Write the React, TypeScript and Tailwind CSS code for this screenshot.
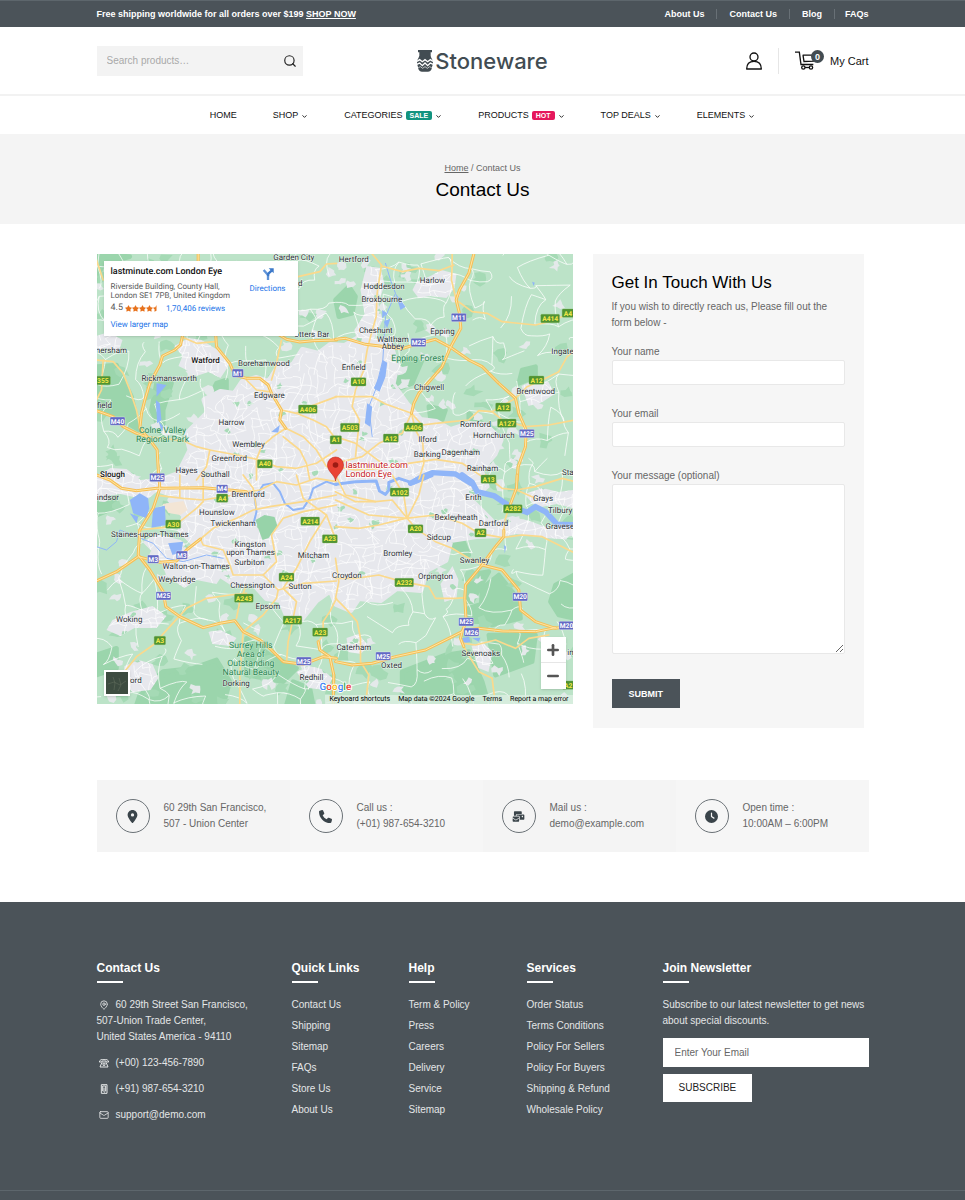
import { useState } from 'react';
import { FaLocationDot, FaPhone, FaClock, FaEnvelopesBulk, FaStar, FaStarHalf } from 'react-icons/fa6';
import { ChevronDown, Mail, MapPin, Minus, Plus, Search } from 'lucide-react';

interface MapTile {
  transform: string;
  water?: string[];
  river?: { d: string; width: number }[];
  forest?: string[];
  motorways: string[];
  roads: string[];
  towns: [string, number, number][];
  parks?: [string, number, number][];
  shields: [string, number, number][];
}

const CITY =
  'M104 166L112 158 108 146 124 138 138 140 146 128 160 124 172 128 184 110 196 112 206 96 222 100 234 91 248 92 262 84 294 91 300 112 296 130 310 150 324 166 340 168 354 176 372 170 389 171 404 186 398 200 384 216 390 232 374 246 394 266 404 281 380 282 354 286 349 306 330 316 324 336 300 334 284 346 262 344 254 356 240 350 234 336 220 346 204 366 190 360 184 346 170 344 154 326 138 330 124 321 112 322 94 306 98 290 84 276 88 262 74 246 90 234 84 216 94 196 90 180Z';

// Every tile is drawn at three units to the pixel
const tiles: MapTile[] = [
  {
    transform: 'translate(0 -4) scale(0.3333)',
    forest: ['M0 350L60 345 105 440 128 540 60 500 0 470Z', 'M100 20L20 40 0 90 0 12Z', 'M200 480L225 400 180 400 165 480 200 560Z', 'M390 390L360 400 350 420 390 440Z', 'M640 350L600 370 590 400 660 410Z'],
    water: ['M180 400L210 405 180 440Z', 'M178 450L190 460 195 510 182 520Z', 'M185 510L200 530 196 545Z', 'M525 545L550 525 545 548Z'],
    motorways: [
      'M305 12L305 60 330 180 358 258 360 290 400 340 415 375 450 385 490 385 515 405 525 430 555 480 550 510 568 535',
      'M258 258L252 285 235 300 198 318 190 345 160 400 145 450 135 490 130 535 160 570 182 600 187 690',
      'M540 250L570 268 610 276 650 272 720 270',
      'M0 482L50 500 80 530 120 550 150 560',
    ],
    roads: [
      'M150 560L260 572 300 590 340 600 420 615 480 628',
      'M0 330L50 335 80 370 100 420 120 480 130 530',
      'M20 330L15 420 0 450',
      'M720 40L690 42 670 65 605 80',
      'M555 270L540 340 525 390',
      'M568 535L620 560 660 600 690 650 720 650',
      'M555 480L600 490 650 510 690 530 720 570',
      'M600 490L640 470 680 455 720 440',
      'M480 628L480 690M340 600L330 650 300 690',
      'M258 262L300 280 355 275',
      'M450 390L480 420 515 425M480 628L495 590 530 560 568 535',
      'M0 30L20 90',
      'M480 628L540 650 600 655 660 640 720 600M560 560L610 600 630 640 640 690',
    ],
    towns: [
      ['Garden City', 592, 29], ['nersham', 45, 309], ['Rickmansworth', 218, 392], ['Borehamwood', 502, 348], ['Edgware', 519, 444],
      ['Harrow', 405, 524], ['Wembley', 456, 591], ['Greenford', 398, 634], ['Hayes', 270, 669], ['Southall', 356, 680],
      ['otters Bar', 646, 261], ['field', 24, 474], ['d', 611, 108],
    ],
    parks: [['Colne Valley', 198, 548], ['Regional Park', 198, 575]],
    shields: [['M1', 424, 369], ['M40', 63, 513], ['M25', 182, 682], ['355', 19, 391], ['A406', 634, 477], ['A40', 505, 641], ['A1', 718, 569]],
  },
  {
    transform: 'translate(239 -4) scale(0.3333)',
    forest: ['M150 350L200 330 260 330 230 400 180 420 165 390Z', 'M40 110L60 140 50 190 10 200 0 150Z', 'M280 470L330 480 320 510 285 505Z', 'M400 490L440 520 430 540 400 520Z', 'M560 360L600 350 600 380 550 400Z'],
    water: ['M142 330L155 338 150 380 132 425 115 415 130 380Z', 'M95 460L110 470 104 530 88 520Z', 'M140 180L155 190 140 205Z', 'M145 215L165 205 155 235Z', 'M180 130L210 170 195 180Z', 'M590 95L598 98 594 108Z'],
    river: [{ d: 'M150 40L165 90 180 130 150 200 142 330 120 420 100 470 110 560', width: 3 }, { d: 'M225 700L260 680 290 668 360 672 405 700', width: 16 }],
    motorways: [
      'M415 12L400 70 372 120 362 150 372 190 376 235 345 292 320 350 290 385 250 430 235 460 228 490',
      'M0 268L30 265 90 283 150 290 200 296 235 285 300 268 345 292 400 330 440 350 490 400 540 445 550 490 572 540 570 590 548 650 545 690',
    ],
    roads: [
      'M110 12L138 45 125 130 122 200 105 260 95 300 85 360 60 420 50 470 72 510 60 620',
      'M138 48L200 65 250 55 310 62 355 45M350 12L350 45 348 90 362 150',
      'M362 150L410 185 455 190 500 215 600 225 640 215 720 185',
      'M228 490L260 525 300 520 350 515 400 510 430 482 470 485 540 445 575 410 620 390 670 365 695 320 720 300',
      'M470 485L500 510 570 530 640 525 720 510',
      'M0 440L60 440 110 440 150 462 228 490',
      'M0 650L60 660 130 655 220 640 300 628 380 640 440 680 480 690',
      'M228 490L240 540 262 580 265 640 250 690',
      'M228 490L200 550 130 580 80 620 0 640M0 560L60 580 140 640',
    ],
    towns: [
      ['Hertford', 55, 35], ['Hoddesdon', 146, 117], ['Harlow', 291, 99], ['Broxbourne', 139, 155], ['Cheshunt', 121, 248], ['Waltham', 172, 275],
      ['Abbey', 172, 298], ['Epping', 321, 252], ['Enfield', 55, 361], ['Chigwell', 281, 419], ['Romford', 420, 531], ['Hornchurch', 475, 564],
      ['Ilford', 276, 577], ['Barking', 275, 622], ['Dagenham', 376, 614], ['Rainham', 441, 664], ['Brentwood', 601, 433], ['Ingate', 681, 313], ['Sta', 697, 674],
    ],
    parks: [['Epping Forest', 247, 333]],
    shields: [['M11', 370, 202], ['M25', 249, 277], ['M25', 574, 550], ['A414', 644, 205], ['A4', 697, 189], ['A10', 69, 395], ['A12', 603, 390], ['A12', 503, 471], ['A127', 514, 519], ['A503', 43, 532], ['A406', 234, 531], ['A12', 166, 564]],
  },
  {
    transform: 'translate(0 221) scale(0.3333)',
    forest: ['M140 640L200 590 290 580 360 555 400 620 380 690 140 690Z', 'M450 490L520 540 600 580 560 620 450 600Z', 'M0 120L50 100 60 60 0 80Z', 'M230 600L130 660 120 690 240 690Z', 'M0 540L60 520 60 580 0 600Z', 'M590 620L640 640 650 690 570 690Z', 'M420 160L460 170 440 190Z'],
    water: ['M100 75L130 55 155 70 158 100 150 130 110 115Z', 'M170 100L205 92 208 150 165 158Z', 'M215 205L260 200 255 230 228 240Z', 'M100 115L125 125 120 145Z'],
    river: [
      { d: 'M0 215L30 225 60 200 70 165 120 185 170 205 210 250 260 260 330 240 380 250', width: 3 },
      { d: 'M470 150L480 110 475 70 500 30 530 25 550 50 565 85 590 105 620 100 640 70 650 40 690 20 720 30', width: 6 },
    ],
    motorways: [
      'M0 0L40 15 75 40 120 47 180 40 320 38 400 45 450 50',
      'M187 0L190 40 170 100 130 165 125 240 160 285 200 350 208 395 250 425 320 458 370 445 415 437 440 470 490 495 520 520 560 560 620 568 680 545 720 550',
      'M0 318L60 290 125 245 190 262 240 258 270 225 312 192',
      'M665 500L670 525 700 545 712 600 710 690',
    ],
    roads: [
      'M450 50L490 45 540 20 600 30 660 10 720 20',
      'M312 192L350 160 420 130 470 105 520 95 620 80 720 60',
      'M60 620L120 545 170 510 215 460 270 400 330 370 400 360 450 355',
      'M312 192L320 210 380 225 400 270 410 300 500 300 540 260 525 180 560 130 620 110 720 90',
      'M430 690L430 600 440 470 500 420 540 370 545 345 500 300',
      'M570 560L575 500 590 430 600 380 560 340 600 280 640 200 690 120',
      'M720 370L700 410 680 440 680 480 665 500',
      'M420 430L430 380 450 330M545 345L620 325 720 318',
      'M125 165L200 158 250 140 300 100 320 80M190 62L260 70 320 75 400 62M250 0L250 65M320 0L320 75',
      'M480 100L470 40 440 0M600 0L620 70 690 120 720 200',
    ],
    towns: [
      ['indsor', 34, 75], ['Brentford', 455, 67], ['Hounslow', 361, 119], ['Twickenham', 410, 153], ['Staines-upon-Thames', 160, 185], ['Kingston', 461, 217],
      ['upon Thames', 462, 241], ['Surbiton', 459, 270], ['Mitcham', 651, 250], ['Walton-on-Thames', 299, 283], ['Weybridge', 241, 320], ['Chessington', 468, 338],
      ['Sutton', 611, 343], ['Epsom', 514, 403], ['Woking', 98, 441], ['ord', 118, 623], ['Dorking', 419, 632], ['Redhill', 645, 615],
    ],
    parks: [['Surrey Hills', 463, 518], ['Area of', 463, 545], ['Outstanding', 463, 572], ['Natural Beauty', 463, 599]],
    shields: [['M4', 377, 41], ['A4', 377, 69], ['A30', 230, 147], ['A214', 641, 138], ['A23', 700, 191], ['M3', 170, 252], ['M3', 256, 240], ['A24', 570, 306], ['M25', 201, 362], ['A243', 442, 369], ['A217', 588, 435], ['A23', 671, 471], ['A3', 190, 496], ['M25', 622, 558]],
  },
  {
    transform: 'translate(239 221) scale(0.3333)',
    forest: ['M440 340L490 300 530 350 550 380 555 430 470 450 435 430Z', 'M200 590L330 540 400 530 440 620 460 690 200 690Z', 'M660 330L715 300 715 430 670 420 645 380Z', 'M460 480L600 480 590 560 480 600Z', 'M400 300L460 290 410 380 395 380Z', 'M400 400L430 390 430 440 400 440Z', 'M330 180L380 190 400 240 350 215Z'],
    water: ['M380 490L400 485 405 500 385 505Z', 'M410 490L435 488 430 500Z', 'M505 210L512 215 508 235Z'],
    river: [
      { d: 'M0 28L60 20 122 18 132 48 150 58 160 45 160 22 190 10 235 25 290 2', width: 9 },
      { d: 'M380 0L410 22 425 50 475 62 520 92 575 112 600 95 630 110 665 148 720 150', width: 17 },
    ],
    motorways: [
      'M0 560L50 570 110 565 180 545 270 525 340 490 380 470 392 440 388 370 390 330 440 270 480 215 505 185 505 165',
      'M440 270L500 285 550 345 555 405 600 440 660 460 720 450',
      'M392 465L430 460 500 468 600 470 660 458',
      'M520 100L543 40 545 0M380 470L375 490 385 515',
    ],
    roads: [
      'M505 165L510 130 520 100',
      'M0 155L70 160 130 150 210 130 300 120 380 145 430 175 500 188 560 180 620 185 680 215 720 235',
      'M0 50L60 80 120 80 170 75 240 160 300 200 350 220 400 250 440 270',
      'M0 310L60 310 130 300 200 320 280 335 300 370 360 370 388 368',
      'M385 515L405 550 430 590 470 610 480 690',
      'M0 370L30 400 65 440 75 490 75 560 100 600 90 690',
      'M170 0L205 60 215 130M265 0L250 60 215 130M0 250L10 320 0 370',
      'M450 0L500 40 543 45 600 35 680 10 720 20M543 45L600 70',
      'M385 505L420 510 480 495 540 520 580 490 640 480',
      'M0 75L100 120 215 130M0 0L30 60 120 80',
    ],
    towns: [
      ['Erith', 414, 75], ['Grays', 623, 79], ['Tilbury', 674, 113], ['Bexleyheath', 362, 136], ['Dartford', 474, 152], ['Gravese', 673, 161], ['Sidcup', 310, 196],
      ['Bromley', 187, 242], ['Swanley', 417, 264], ['Croydon', 34, 308], ['Orpington', 300, 312], ['Caterham', 55, 525], ['Oxted', 168, 579], ['Sevenoaks', 436, 542], ['in', 705, 540],
    ],
    shields: [['A13', 459, 12], ['A102', 192, 51], ['A282', 532, 101], ['A20', 240, 161], ['A2', 435, 173], ['A232', 206, 322], ['M20', 554, 365], ['M25', 392, 440], ['M26', 408, 471], ['M20', 693, 451], ['M25', 143, 543], ['A2', 698, 630]],
  },
];

const seeded = (seed: number) => () => {
  seed = (seed * 16807) % 2147483647;
  return seed / 2147483647;
};

// Irregular net of minor streets over the whole map, each one slightly bent
const streetNet = (step: number, jitter: number, keep: number, seed: number) => {
  const rand = seeded(seed);
  const cols = Math.ceil(477 / step) + 2;
  const rows = Math.ceil(450 / step) + 2;
  const at: [number, number][][] = [];
  for (let r = 0; r < rows; r++) {
    at.push([]);
    for (let c = 0; c < cols; c++) {
      at[r].push([(c - 0.5 + (rand() - 0.5) * jitter) * step, (r - 0.5 + (rand() - 0.5) * jitter) * step]);
    }
  }
  const bend = ([x1, y1]: [number, number], [x2, y2]: [number, number]) => {
    const mx = (x1 + x2) / 2 + (rand() - 0.5) * step * 0.7;
    const my = (y1 + y2) / 2 + (rand() - 0.5) * step * 0.7;
    return `M${x1.toFixed(1)} ${y1.toFixed(1)}Q${mx.toFixed(1)} ${my.toFixed(1)} ${x2.toFixed(1)} ${y2.toFixed(1)}`;
  };
  let d = '';
  for (let r = 0; r < rows - 1; r++) {
    for (let c = 0; c < cols - 1; c++) {
      if (rand() < keep) d += bend(at[r][c], at[r][c + 1]);
      if (rand() < keep) d += bend(at[r][c], at[r + 1][c]);
    }
  }
  return d;
};

const patches = (count: number, size: number, seed: number) => {
  const rand = seeded(seed);
  let d = '';
  for (let i = 0; i < count; i++) {
    const cx = rand() * 477;
    const cy = rand() * 450;
    const sides = 9;
    for (let s = 0; s < sides; s++) {
      const a = (s / sides) * Math.PI * 2;
      const r = size * (0.3 + rand());
      d += `${s ? 'L' : 'M'}${(cx + Math.cos(a) * r * 1.2).toFixed(1)} ${(cy + Math.sin(a) * r).toFixed(1)}`;
    }
    d += 'Z';
  }
  return d;
};

const countryRoads = streetNet(19, 0.9, 0.5, 77);
const cityStreets = streetNet(8, 0.8, 0.6, 913);
const villages = patches(150, 5, 4242);
const woods = patches(130, 7, 991);
const cityParks = patches(220, 3, 5150);

// Built-up areas around the capital: Watford, Slough, Weybridge, Harlow, Gravesend and others
const SUBURBS = [
  'M78 92L92 84 105 86 118 94 128 100 132 112 124 124 112 118 100 122 90 116 82 112 86 102Z',
  'M0 222L14 214 30 215 44 226 62 224 84 216 92 240 84 246 60 238 50 246 24 240 0 244Z',
  'M270 12L284 14 288 30 282 50 286 66 278 84 262 92 258 76 268 60 264 36Z',
  'M320 28L334 22 345 16 360 20 358 34 350 44 334 42 322 44 316 36Z',
  'M46 288L60 280 84 286 100 300 128 318 120 330 100 326 88 334 70 322 64 306Z',
  'M16 366L34 358 56 352 70 362 60 374 38 374 24 382 10 376Z',
  'M28 412L42 406 56 410 62 424 54 436 36 438 26 428Z',
  'M112 378L124 376 140 384 134 392 116 390Z',
  'M200 418L212 412 225 415 236 424 230 436 212 434Z',
  'M425 132L438 126 452 128 458 140 446 148 432 152Z',
  'M396 268L416 262 436 268 452 274 477 270 477 286 450 284 420 280 400 284Z',
  'M428 240L446 234 462 238 477 236 477 254 460 250 440 254Z',
  'M375 392L386 388 396 398 392 418 382 414Z',
  'M344 330L356 312 362 326 360 344 348 348Z',
  'M250 384L262 380 272 392 264 400 252 398Z',
  'M0 82L12 78 26 86 22 98 8 94 0 98Z',
].join('');

function LondonMap() {
  return (
    <svg viewBox="0 0 477 450" preserveAspectRatio="xMidYMid slice" textRendering="geometricPrecision" className="block h-full w-full font-['Roboto',sans-serif]" role="img" aria-label="Map of London">
      <clipPath id="city"><path d={CITY} /><path d={SUBURBS} /></clipPath>
      <rect width="477" height="450" fill="#bce3c8" />
      {tiles.map((t) => (
        <g key={t.transform} transform={t.transform}>
          {t.forest?.map((d) => <path key={d} d={d} fill="#9bd5ac" stroke="#9bd5ac" strokeWidth="14" strokeLinejoin="round" />)}
        </g>
      ))}
      <path d={woods} fill="#a5dab5" />
      <path d={villages} fill="#e4e9ea" />
      <path d={CITY} fill="#e7e8ed" stroke="#e7e8ed" strokeWidth="6" strokeLinejoin="round" />
      <path d={SUBURBS} fill="#e7e8ed" />
      <path d={countryRoads} fill="none" stroke="#fff" strokeOpacity="0.75" strokeWidth="1" />
      <g clipPath="url(#city)">
        <path d={cityParks} fill="#a8dbb8" />
        <path d={cityStreets} fill="none" stroke="#fff" strokeWidth="0.7" />
      </g>
      <path d="M66 250L87 247 91 256 84 261 72 259Z" fill="#f3e5d5" />
      <path d="M159 266L168 261 178 263 181 272 172 284 166 286 163 278Z" fill="#97d3a9" />
      {tiles.map((t) => (
        <g key={t.transform} transform={t.transform} fill="none" strokeLinejoin="round" strokeLinecap="round">
          {t.water?.map((d) => <path key={d} d={d} fill="#8fb5f8" />)}
          {t.river?.map((r) => <path key={r.d} d={r.d} stroke="#8fb5f8" strokeWidth={r.width} />)}
          {t.roads.map((d) => <path key={d} d={d} stroke="#fbd98c" strokeWidth="5" />)}
          {t.motorways.map((d) => <path key={d} d={d} stroke="#f6bf56" strokeWidth="9" />)}
          {t.motorways.map((d) => <path key={d} d={d} stroke="#fde6a6" strokeWidth="3" />)}
        </g>
      ))}
      {tiles.map((t) => (
        <g key={t.transform} transform={t.transform} textAnchor="middle">
          {t.shields.map(([name, x, y]) => {
            const w = name.length * 11 + 12;
            const motorway = name[0] === 'M';
            return (
              <g key={`${name}-${x}-${y}`}>
                <rect x={x - w / 2} y={y - 12} width={w} height="25" rx="3" fill={motorway ? '#6269c4' : '#4f9333'} stroke={motorway ? '#fff' : '#7db35a'} strokeWidth="1" />
                <text x={x} y={y + 8} fontSize="20" fontWeight="700" fill={motorway ? '#fff' : '#f7ea4a'}>{name}</text>
              </g>
            );
          })}
          <g fontSize="24" fill="#2e3338" stroke="#fff" strokeWidth="3" strokeOpacity="0.7" paintOrder="stroke">
            {t.towns.map(([name, x, y]) => <text key={name} x={x} y={y}>{name}</text>)}
          </g>
          <g fontSize="26" fill="#2c8654" stroke="#d9f0df" strokeWidth="3" strokeOpacity="0.7" paintOrder="stroke">
            {t.parks?.map(([name, x, y]) => <text key={name} x={x} y={y}>{name}</text>)}
          </g>
        </g>
      ))}
      <g fontWeight="500" fill="#111" stroke="#fff" strokeWidth="1" strokeOpacity="0.7" paintOrder="stroke" fontSize="8" textAnchor="middle">
        <text x="109" y="109">Watford</text>
        <text x="16" y="223">Slough</text>
      </g>
      <path d="M239 227C238 220 231 218 231 211A8 8 0 0 1 247 211C247 218 240 220 239 227Z" fill="#ea4335" stroke="#b92b20" strokeWidth="0.6" />
      <circle cx="239" cy="211" r="2.8" fill="#9c1b13" />
      <g fontSize="9" fill="#c5221f" stroke="#fff" strokeWidth="1.6" paintOrder="stroke">
        <text x="249" y="214">lastminute.com</text>
        <text x="249" y="223">London Eye</text>
      </g>
      <text x="223" y="436" fontSize="10" fontWeight="500" stroke="#fff" strokeWidth="1.6" paintOrder="stroke">
        <tspan fill="#4285f4">G</tspan><tspan fill="#ea4335">o</tspan><tspan fill="#fbbc05">o</tspan><tspan fill="#4285f4">g</tspan><tspan fill="#34a853">l</tspan><tspan fill="#ea4335">e</tspan>
      </text>
    </svg>
  );
}

function MapPanel() {
  return (
    <div className="relative h-[450px] min-w-0 flex-1 overflow-hidden font-['Roboto',sans-serif] [text-rendering:geometricPrecision]">
      <LondonMap />
      <div className="absolute top-[7px] left-[7px] flex h-[75px] w-[194px] justify-between bg-white pt-[7px] pr-3 pl-[7px] text-[8px] leading-[9px] text-[#5b5b5b] shadow">
        <div className="whitespace-nowrap">
          <p className="text-[9px] font-medium text-[#111]">lastminute.com London Eye</p>
          <p className="mt-[5px]">Riverside Building, County Hall,</p>
          <p>London SE1 7PB, United Kingdom</p>
          <div className="mt-1 flex items-center">
            <span className="mr-[2px] text-[9px]">4.5</span>
            <span className="flex text-[7px] text-[#e7711b]">
              <FaStar /><FaStar /><FaStar /><FaStar /><FaStarHalf />
            </span>
            <a href="#reviews" className="ml-[6px] text-[#1a73e8]">1,70,406 reviews</a>
          </div>
          <a href="#map" className="mt-[7px] block text-[#1a73e8]">View larger map</a>
        </div>
        <a href="#directions" className="flex flex-col items-center gap-1 text-[#1a73e8]">
          <svg viewBox="0 0 36 36" className="h-3 w-3">
            <path d="M18 36V21L5 6" fill="none" stroke="#5f93d8" strokeWidth="7" />
            <path d="M18 24L19 17 29 8" fill="none" stroke="#3b78c9" strokeWidth="7" />
            <path d="M20 1H35V16Z" fill="#3b78c9" />
          </svg>
          Directions
        </a>
      </div>
      <div className="absolute bottom-2 left-[7px] h-[26px] w-[26px] border-2 border-white bg-[#3d4c40] shadow">
        <svg viewBox="0 0 22 22" className="h-full w-full" fill="none" stroke="#65715f" strokeWidth="1">
          <path d="M2 12L8 10 14 13 20 9M7 5L9 11 8 18M13 6L15 13 12 19" opacity="0.5" />
        </svg>
      </div>
      <div className="absolute right-[7px] bottom-[15px] flex w-[25px] flex-col bg-white shadow">
        <button aria-label="Zoom in" className="flex h-[26px] items-center justify-center border-b border-[#e6e6e6] text-[#555]"><Plus size={16} strokeWidth={4} /></button>
        <button aria-label="Zoom out" className="flex h-[26px] items-center justify-center text-[#555]"><Minus size={16} strokeWidth={4} /></button>
      </div>
      <div className="absolute right-0 bottom-0 flex gap-2 bg-[#dcefe2]/80 px-1 text-[7px] leading-[9px] whitespace-nowrap text-black">
        <button>Keyboard shortcuts</button>
        <span>Map data ©2024 Google</span>
        <a href="#terms">Terms</a>
        <a href="#report">Report a map error</a>
      </div>
    </div>
  );
}

function ContactForm() {
  const [name, setName] = useState('');
  const [email, setEmail] = useState('');
  const [message, setMessage] = useState('');
  const field = 'block w-full rounded-xs border border-[#e8e8e8] bg-white px-2 outline-none';

  return (
    <form onSubmit={(e) => e.preventDefault()} className="mr-[5px] w-[271px] bg-[#f6f6f6] px-[19px] pt-[17px] pb-5">
      <h2 className="text-[17px] leading-6 font-medium text-black">Get In Touch With Us</h2>
      <p className="mt-1">If you wish to directly reach us, Please fill out the form below -</p>
      <label htmlFor="name" className="mt-[13px] block">Your name</label>
      <input id="name" value={name} onChange={(e) => setName(e.target.value)} className={`${field} h-[25px]`} />
      <label htmlFor="email" className="mt-[21px] block">Your email</label>
      <input id="email" type="email" value={email} onChange={(e) => setEmail(e.target.value)} className={`${field} h-[25px]`} />
      <label htmlFor="message" className="mt-[21px] block">Your message (optional)</label>
      <textarea id="message" value={message} onChange={(e) => setMessage(e.target.value)} className={`${field} h-[170px]`} />
      <button className="mt-[25px] block h-[29px] bg-[#4b5359] px-[17px] text-[9px] font-bold text-white">SUBMIT</button>
    </form>
  );
}

const topLinks = ['About Us', 'Contact Us', 'Blog', 'FAQs'];

const menu = [
  { label: 'HOME', plain: true },
  { label: 'SHOP' },
  { label: 'CATEGORIES', tag: 'SALE', tagClass: 'bg-[#12937f]' },
  { label: 'PRODUCTS', tag: 'HOT', tagClass: 'bg-[#e5175c]' },
  { label: 'TOP DEALS' },
  { label: 'ELEMENTS' },
];

const infos = [
  { icon: FaLocationDot, lines: ['60 29th San Francisco,', '507 - Union Center'] },
  { icon: FaPhone, lines: ['Call us :', '(+01) 987-654-3210'] },
  { icon: FaEnvelopesBulk, lines: ['Mail us :', 'demo@example.com'] },
  { icon: FaClock, lines: ['Open time :', '10:00AM – 6:00PM'] },
];

const linkColumns = [
  { title: 'Quick Links', links: ['Contact Us', 'Shipping', 'Sitemap', 'FAQs', 'Store Us', 'About Us'] },
  { title: 'Help', links: ['Term & Policy', 'Press', 'Careers', 'Delivery', 'Service', 'Sitemap'] },
  { title: 'Services', links: ['Order Status', 'Terms Conditions', 'Policy For Sellers', 'Policy For Buyers', 'Shipping & Refund', 'Wholesale Policy'] },
];

function FooterTitle({ children }: { children: string }) {
  return (
    <h3 className="mb-[14px] text-xs leading-4 font-bold text-white">
      {children}
      <span className="mt-[5px] block h-[2px] w-[26px] bg-white" />
    </h3>
  );
}

function Header() {
  return (
    <header className="text-[#222]">
      <div className="border-t border-[#5d666c] bg-[#4b5359] text-[9px] font-bold text-white">
        <div className="mx-auto flex h-[26px] max-w-[772px] items-center justify-between">
          <p>Free shipping worldwide for all orders over $199 <a href="#shop" className="underline">SHOP NOW</a></p>
          <nav className="flex">
            {topLinks.map((l) => (
              <a key={l} href="#top" className="ml-3 flex items-center border-r border-[#687076] pr-3 leading-[10px] last:border-0 last:pr-0 last:ml-[10px]">{l}</a>
            ))}
          </nav>
        </div>
      </div>
      <div className="border-b-2 border-[#f2f2f2]">
        <div className="mx-auto grid h-[67px] max-w-[772px] grid-cols-3 items-center">
          <div className="flex h-[30px] w-[206px] items-center bg-[#f3f3f3] pr-[6px] pl-[10px]">
            <input aria-label="Search products" placeholder="Search products…" className="min-w-0 flex-1 bg-transparent outline-none placeholder:text-[#a9a9a9]" />
            <button aria-label="Search"><Search size={14} strokeWidth={2} /></button>
          </div>
          <a href="#home" className="flex items-center justify-center gap-[2px] text-[#424c52]">
            <svg viewBox="0 0 48 66" className="h-[22px] w-4">
              <path d="M3 0H45V7H41V17C41 24 48 28 48 37C48 47 44 50 44 57C42 62 38 65 33 65H15C10 65 6 62 4 57C4 50 0 47 0 37C0 28 6 24 7 17V7H3Z" fill="currentColor" />
              <path d="M0 34L8 29 16 35 24 29 32 35 40 29 48 34M0 43L8 39 16 47 24 39 32 47 40 39 48 43" fill="none" stroke="#fff" strokeWidth="4" />
              <path d="M4 53L10 50 17 55 24 50 31 55 38 50 44 53" fill="none" stroke="#fff" strokeWidth="2" />
            </svg>
            <span className="font-['Inter',sans-serif] text-[22px] leading-6 font-medium">Stoneware</span>
          </a>
          <div className="flex items-center justify-end">
            <a href="#account" aria-label="Account">
              <svg viewBox="0 0 48 54" className="h-[18px] w-4" fill="none" stroke="#111" strokeWidth="4">
                <circle cx="24" cy="15" r="12" />
                <path d="M2 51C2 36 11 28 24 28S46 36 46 51Z" strokeLinejoin="round" />
              </svg>
            </a>
            <span className="mx-4 h-[26px] w-px bg-[#e6e6e6]" />
            <a href="#cart" className="flex items-center text-[11px] text-[#111]">
              <span className="relative mr-[15px]">
                <svg viewBox="0 0 60 56" className="h-[19px] w-5" fill="none" stroke="#111" strokeWidth="4">
                  <path d="M0 3H13L18 40H55M23 12H55V30L27 31L24 12" />
                  <circle cx="25" cy="49" r="5" />
                  <circle cx="48" cy="49" r="5" />
                  <path d="M30 49H43" />
                </svg>
                <span className="absolute -top-px left-4 flex h-[13px] w-[13px] items-center justify-center rounded-full bg-[#424c52] text-[9px] font-bold text-white">0</span>
              </span>
              My Cart
            </a>
          </div>
        </div>
      </div>
      <nav className="flex h-[38px] items-center justify-center gap-9 text-[9px] font-medium text-[#111]">
        {menu.map((m) => (
          <a key={m.label} href="#menu" className="flex items-center gap-[3px]">
            {m.label}
            {m.tag && <span className={`rounded-xs px-1 text-[7px] leading-[9px] font-bold text-white ${m.tagClass}`}>{m.tag}</span>}
            {!m.plain && <ChevronDown size={7} strokeWidth={3} className="mt-[2px]" />}
          </a>
        ))}
      </nav>
    </header>
  );
}

function Footer() {
  return (
    <footer className="bg-[#4b5359] text-[#e4e6e7]">
      <div className="mx-auto grid max-w-[772px] grid-cols-[195fr_117fr_118fr_136fr_206fr] pt-[58px] pb-[67px]">
        <div>
          <FooterTitle>Contact Us</FooterTitle>
          <address className="flex flex-col gap-[10px] not-italic">
            <p>
              <MapPin size={10} className="mr-[7px] ml-[2px] inline" />60 29th Street San Francisco,<br />
              507-Union Trade Center,<br />
              United States America - 94110
            </p>
            <p>
              <svg viewBox="0 0 30 27" className="mr-[7px] ml-[2px] inline h-[9px] w-[10px]" fill="none" stroke="currentColor" strokeWidth="3">
                <path d="M1 9C1 3 8 1 15 1S29 3 29 9H21V6H9V9ZM8 12L3 24H27L22 12Z" />
                <circle cx="15" cy="17" r="3" />
              </svg>
              (+00) 123-456-7890
            </p>
            <p>
              <svg viewBox="0 0 30 30" className="mr-[7px] ml-[2px] inline h-[10px] w-[10px]" fill="none" stroke="currentColor" strokeWidth="3">
                <path d="M7 2H24V28H7ZM11 6H20V21H11ZM15 25H17M15 11V18" />
              </svg>
              (+91) 987-654-3210
            </p>
            <p><Mail size={10} className="mr-[7px] ml-[2px] inline" />support@demo.com</p>
          </address>
        </div>
        {linkColumns.map((col) => (
          <div key={col.title}>
            <FooterTitle>{col.title}</FooterTitle>
            <ul className="flex flex-col gap-[5px]">
              {col.links.map((l) => <li key={l}><a href="#footer">{l}</a></li>)}
            </ul>
          </div>
        ))}
        <form onSubmit={(e) => e.preventDefault()}>
          <FooterTitle>Join Newsletter</FooterTitle>
          <p>Subscribe to our latest newsletter to get news about special discounts.</p>
          <input aria-label="Enter Your Email" type="email" placeholder="Enter Your Email" className="mt-[9px] block h-[29px] w-full bg-white px-3 text-[#555] outline-none placeholder:text-[#666]" />
          <button className="mt-[7px] block h-[28px] bg-white px-4 text-[#222]">SUBSCRIBE</button>
        </form>
      </div>
      <div className="h-[10px] border-t border-[#5d666c]" />
    </footer>
  );
}

export default function App() {
  return (
    <div className="bg-white font-['Liberation_Sans',Arial,sans-serif] text-[10px] leading-4 text-[#666]">
      <Header />
      <section className="bg-[#f4f4f4] pt-[26px] pb-[22px] text-center">
        <p className="text-[9px]"><a href="#home" className="underline">Home</a> / Contact Us</p>
        <h1 className="mt-[2px] text-[19px] leading-6 font-medium text-black">Contact Us</h1>
      </section>
      <main className="mx-auto max-w-[772px] pt-[30px] pb-[50px]">
        <div className="flex items-start gap-5">
          <MapPanel />
          <ContactForm />
        </div>
        <div className="mt-[52px] grid grid-cols-4">
          {infos.map(({ icon: Icon, lines }) => (
            <div key={lines[0]} className="flex h-[72px] items-center gap-[14px] bg-[#f4f4f4] pl-[19px] even:bg-[#f6f6f6]">
              <span className="flex h-[34px] w-[34px] items-center justify-center rounded-full border border-[#6b7277] text-[13px] text-[#3a444a]"><Icon /></span>
              <p>{lines[0]}<br />{lines[1]}</p>
            </div>
          ))}
        </div>
      </main>
      <Footer />
    </div>
  );
}
